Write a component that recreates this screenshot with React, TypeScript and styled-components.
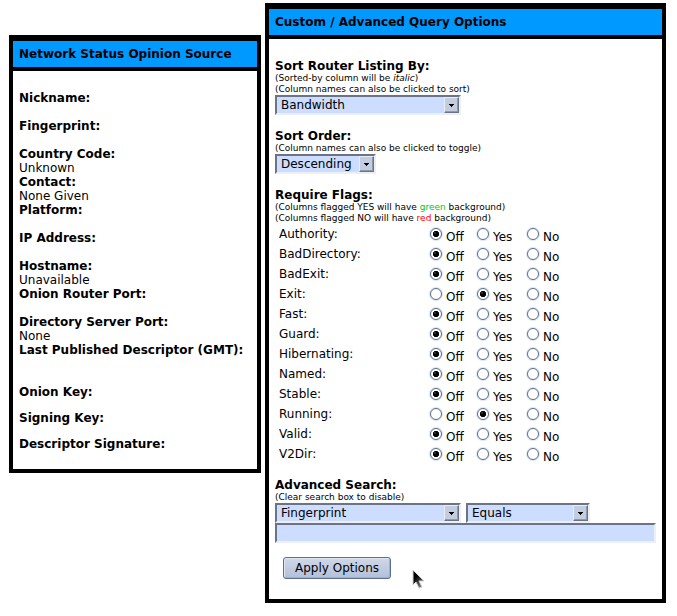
import React, { useId, useState } from "react";
import styled, { createGlobalStyle } from "styled-components";

const GlobalStyle = createGlobalStyle`
  * { box-sizing: border-box; }
  body {
    margin: 0;
    background: #fff;
    color: #000;
    font: 12px/14px "DejaVu Sans", Verdana, sans-serif;
  }
`;

const Page = styled.main`
  display: grid;
  grid-template-columns: minmax(max-content, 252fr) 401fr;
  align-items: start;
  gap: 4px;
  padding: 3px 11px 13px 9px;
`;

const Panel = styled.section<{ $lowered?: boolean }>`
  margin-top: ${({ $lowered }) => ($lowered ? 32 : 0)}px;
  border: 4px solid #000;
  border-top-width: 6px;
`;

const PanelTitle = styled.h2`
  margin: 0;
  padding: 6px;
  background: #0099ff;
  border-bottom: 4px solid #000;
  font-size: 12px;
  line-height: 14px;
`;

const DescriptorBody = styled.div`
  padding: 20px 6px 18px;
`;

const Details = styled.dl`
  margin: 0 0 14px;
`;

const Term = styled.dt`
  font-weight: bold;
`;

const Value = styled.dd`
  margin: 0;
  min-height: 14px;
`;

const KeyHeading = styled.p`
  margin: 0 0 12px;
  font-weight: bold;
  &:last-child { margin-bottom: 0; }
`;

const OptionsForm = styled.form`
  display: flex;
  flex-direction: column;
  padding: 20px 6px 10px;
`;

const Group = styled.section<{ $gap?: number }>`
  display: flex;
  flex-direction: column;
  margin-bottom: ${({ $gap = 14 }) => $gap}px;
`;

const GroupTitle = styled.h3`
  margin: 0;
  font-size: 12px;
  line-height: 14px;
`;

const Note = styled.p`
  margin: 0;
  font-size: 9px;
  line-height: 11px;
`;

const Tint = styled.span<{ $color: string }>`
  color: ${({ $color }) => $color};
`;

const SelectFrame = styled.span<{ $width: number }>`
  position: relative;
  display: block;
  width: ${({ $width }) => $width}px;
  max-width: 100%;
`;

const SelectBox = styled.select`
  appearance: none;
  display: block;
  width: 100%;
  height: 20px;
  padding: 0 18px 0 4px;
  border: 2px solid;
  border-color: #6b7384 #eceff6 #eceff6 #6b7384;
  border-radius: 0;
  background: #ccddff;
  color: #000;
  font: inherit;
`;

const ArrowButton = styled.span`
  position: absolute;
  top: 2px;
  right: 2px;
  display: grid;
  place-items: center;
  width: 15px;
  height: 16px;
  border: 1px solid;
  border-color: #e9edf5 #6b7384 #6b7384 #e9edf5;
  box-shadow: inset -1px -1px #8f99aa;
  background: #c3cde0;
  pointer-events: none;
`;

const FlagList = styled.div`
  display: flex;
  flex-direction: column;
  padding: 1px 4px 0;
`;

const FlagRow = styled.div`
  display: grid;
  grid-template-columns: 151px 47px 50px 40px;
  height: 20px;
`;

const FlagName = styled.span`
  padding-top: 2px;
`;

const Choice = styled.label`
  display: flex;
  align-items: flex-start;
  gap: 4px;
  padding-top: 3px;
`;

const ChoiceText = styled.span`
  padding-top: 2px;
`;

const Radio = styled.input`
  appearance: none;
  flex: none;
  width: 12px;
  height: 12px;
  margin: 0;
  border: 1px solid #5c6f86;
  border-radius: 50%;
  box-shadow: 0 0 1px 1px #dbe3f2;
  background: #fff;
  &:checked {
    background:
      radial-gradient(circle at 4px 4px, #8c8c8c 0, transparent 1px),
      radial-gradient(circle, #000 50%, transparent 60%) center / 8px 8px no-repeat,
      #fff;
  }
`;

const SearchRow = styled.div`
  display: flex;
  gap: 5px;
`;

const SearchInput = styled.input`
  width: 100%;
  height: 20px;
  padding: 0 4px;
  border: 2px solid;
  border-color: #6b7384 #eceff6 #eceff6 #6b7384;
  border-radius: 0;
  background: #ccddff;
  font: inherit;
`;

const Actions = styled.div`
  display: flex;
  align-items: flex-start;
  gap: 21px;
  padding: 0 8px;
`;

const ApplyButton = styled.button`
  height: 22px;
  padding: 0 11px;
  border: 1px solid #5b6f91;
  border-radius: 3px;
  box-shadow: inset 1px 1px #dfe6f2, inset -1px -1px #a3b0c8;
  background: linear-gradient(#cfd8e8, #b3c0da);
  color: #000;
  font: inherit;
`;

const Pointer = styled.svg`
  margin-top: 12px;
`;

const descriptor: [string, string][] = [
  ["Nickname:", ""],
  ["Fingerprint:", ""],
  ["Country Code:", "Unknown"],
  ["Contact:", "None Given"],
  ["Platform:", ""],
  ["IP Address:", ""],
  ["Hostname:", "Unavailable"],
  ["Onion Router Port:", ""],
  ["Directory Server Port:", "None"],
  ["Last Published Descriptor (GMT):", ""],
];

const keys = ["Onion Key:", "Signing Key:", "Descriptor Signature:"];

const flags = [
  "Authority", "BadDirectory", "BadExit", "Exit", "Fast", "Guard",
  "Hibernating", "Named", "Stable", "Running", "Valid", "V2Dir",
];

const choices = ["Off", "Yes", "No"];

function Dropdown({ label, options, width }: { label: string; options: string[]; width: number }) {
  return (
    <SelectFrame $width={width}>
      <SelectBox aria-label={label}>
        {options.map((option) => <option key={option}>{option}</option>)}
      </SelectBox>
      <ArrowButton aria-hidden="true">
        <svg width="5" height="3" viewBox="0 0 5 3" shapeRendering="crispEdges">
          <path d="M0 0H5V1H4V2H3V3H2V2H1V1H0Z" />
        </svg>
      </ArrowButton>
    </SelectFrame>
  );
}

function Flag({ name }: { name: string }) {
  const id = useId();
  const [value, setValue] = useState(name === "Exit" || name === "Running" ? "Yes" : "Off");
  return (
    <FlagRow role="radiogroup" aria-labelledby={id}>
      <FlagName id={id}>{name}:</FlagName>
      {choices.map((choice) => (
        <Choice key={choice}>
          <Radio type="radio" name={name} value={choice} checked={value === choice} onChange={() => setValue(choice)} />
          <ChoiceText>{choice}</ChoiceText>
        </Choice>
      ))}
    </FlagRow>
  );
}

export default function App() {
  return (
    <>
      <GlobalStyle />
      <Page>
        <Panel $lowered>
          <PanelTitle>Network Status Opinion Source</PanelTitle>
          <DescriptorBody>
            <Details>
              {descriptor.map(([term, value]) => (
                <React.Fragment key={term}>
                  <Term>{term}</Term>
                  <Value>{value}</Value>
                </React.Fragment>
              ))}
            </Details>
            {keys.map((key) => <KeyHeading key={key}>{key}</KeyHeading>)}
          </DescriptorBody>
        </Panel>

        <Panel>
          <PanelTitle>Custom / Advanced Query Options</PanelTitle>
          <OptionsForm onSubmit={(event) => event.preventDefault()}>
            <Group>
              <GroupTitle>Sort Router Listing By:</GroupTitle>
              <Note>(Sorted-by column will be <em>italic</em>)</Note>
              <Note>(Column names can also be clicked to sort)</Note>
              <Dropdown label="Sort router listing by" options={["Bandwidth", "Router Name", "Fingerprint", "Country Code"]} width={186} />
            </Group>
            <Group>
              <GroupTitle>Sort Order:</GroupTitle>
              <Note>(Column names can also be clicked to toggle)</Note>
              <Dropdown label="Sort order" options={["Descending", "Ascending"]} width={101} />
            </Group>
            <Group $gap={13}>
              <GroupTitle>Require Flags:</GroupTitle>
              <Note>(Columns flagged YES will have <Tint $color="#00cc00">green</Tint> background)</Note>
              <Note>(Columns flagged NO will have <Tint $color="#ff0000">red</Tint> background)</Note>
              <FlagList>
                {flags.map((name) => <Flag key={name} name={name} />)}
              </FlagList>
            </Group>
            <Group>
              <GroupTitle>Advanced Search:</GroupTitle>
              <Note>(Clear search box to disable)</Note>
              <SearchRow>
                <Dropdown label="Search field" options={["Fingerprint", "Nickname", "Hostname"]} width={186} />
                <Dropdown label="Comparison" options={["Equals", "Contains", "Less Than", "Greater Than"]} width={124} />
              </SearchRow>
              <SearchInput type="text" aria-label="Search text" />
            </Group>
            <Actions>
              <ApplyButton type="submit">Apply Options</ApplyButton>
              <Pointer width="13" height="20" viewBox="0 0 13 20" aria-hidden="true">
                <defs>
                  <linearGradient id="pointer-fill" x1="0" y1="0" x2="0.6" y2="1">
                    <stop offset="0.4" stopColor="#000" />
                    <stop offset="1" stopColor="#777" />
                  </linearGradient>
                </defs>
                <path d="M1 1V16L4 13L7 19L10 18L7 12H12Z" fill="url(#pointer-fill)" stroke="#d0d0d0" strokeWidth="1" />
              </Pointer>
            </Actions>
          </OptionsForm>
        </Panel>
      </Page>
    </>
  );
}
